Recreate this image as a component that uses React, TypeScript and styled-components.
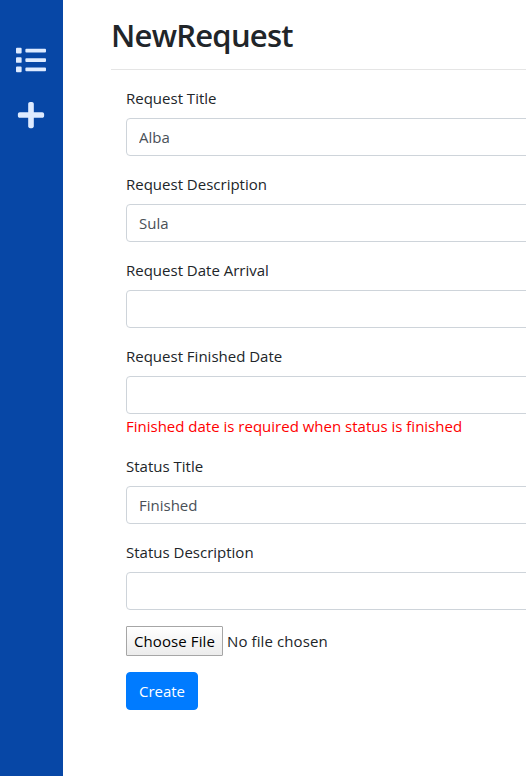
import React from 'react';
import styled, { createGlobalStyle } from 'styled-components';
import { FaList, FaPlus } from 'react-icons/fa';

const GlobalStyle = createGlobalStyle`
  *, *::before, *::after { box-sizing: border-box; }
  body {
    margin: 0;
    background: #fff;
    color: #212529;
    font-family: 'Open Sans', 'Noto Sans', sans-serif;
    font-size: 15px;
    line-height: 24px;
    overflow: hidden;
  }
`;

const Page = styled.div`
  display: flex;
  height: 100vh;
  overflow: hidden;
`;

const Sidebar = styled.nav`
  flex: 0 0 63px;
  display: flex;
  flex-direction: column;
  align-items: center;
  gap: 25px;
  padding: 45px 2px 0 0;
  background: #0747a6;
  color: #deebff;
`;

const NavLink = styled.a`
  display: flex;
  height: 30px;
  font-size: 30px;
`;

const Main = styled.main`
  flex: 0 0 700px;
  padding: 17px 0 0 48px;
`;

const Title = styled.h1`
  margin: 0;
  height: 53px;
  border-bottom: 1px solid #e5e5e5;
  font-size: 31px;
  font-weight: 600;
  letter-spacing: -0.75px;
  line-height: 36px;
  white-space: nowrap;
`;

const Form = styled.form`
  padding: 16px 0 0 15px;
`;

const Field = styled.div`
  margin-bottom: 16px;
`;

const Label = styled.label`
  display: block;
  height: 24px;
  margin-bottom: 8px;
  white-space: nowrap;
`;

const Input = styled.input`
  display: block;
  width: 100%;
  height: 38px;
  padding: 6px 12px;
  border: 1px solid #ced4da;
  border-radius: 4px;
  background: #fff;
  color: #495057;
  font: inherit;
`;

const ErrorText = styled.div`
  height: 24px;
  color: #f00;
  white-space: nowrap;
`;

const FilePicker = styled.div`
  display: flex;
  align-items: center;
  gap: 4px;
  height: 30px;
  margin-bottom: 16px;
  letter-spacing: 0.1px;
  white-space: nowrap;
`;

const ChooseButton = styled.button`
  width: 97px;
  height: 30px;
  padding: 0;
  border: 1px solid #a6a6a6;
  border-radius: 1px;
  background: linear-gradient(#fff, #ececec);
  color: #000;
  font: inherit;
  letter-spacing: inherit;
  line-height: 28px;
`;

const SubmitButton = styled.button`
  display: block;
  width: 72px;
  height: 38px;
  padding: 0;
  border: 1px solid #007bff;
  border-radius: 4px;
  background: #007bff;
  color: #fff;
  font: inherit;
`;

interface FieldData {
  label: string;
  value?: string;
  error?: string;
}

const fields: FieldData[] = [
  { label: 'Request Title', value: 'Alba' },
  { label: 'Request Description', value: 'Sula' },
  { label: 'Request Date Arrival' },
  { label: 'Request Finished Date', error: 'Finished date is required when status is finished' },
  { label: 'Status Title', value: 'Finished' },
  { label: 'Status Description' },
];

export default function App() {
  return (
    <Page>
      <GlobalStyle />
      <Sidebar>
        <NavLink><FaList /></NavLink>
        <NavLink><FaPlus /></NavLink>
      </Sidebar>
      <Main>
        <Title>NewRequest</Title>
        <Form>
          {fields.map(({ label, value, error }) => (
            <Field key={label}>
              <Label>{label}</Label>
              <Input defaultValue={value} />
              {error && <ErrorText>{error}</ErrorText>}
            </Field>
          ))}
          <FilePicker>
            <ChooseButton type="button">Choose File</ChooseButton>
            <span>No file chosen</span>
          </FilePicker>
          <SubmitButton type="button">Create</SubmitButton>
        </Form>
      </Main>
    </Page>
  );
}
